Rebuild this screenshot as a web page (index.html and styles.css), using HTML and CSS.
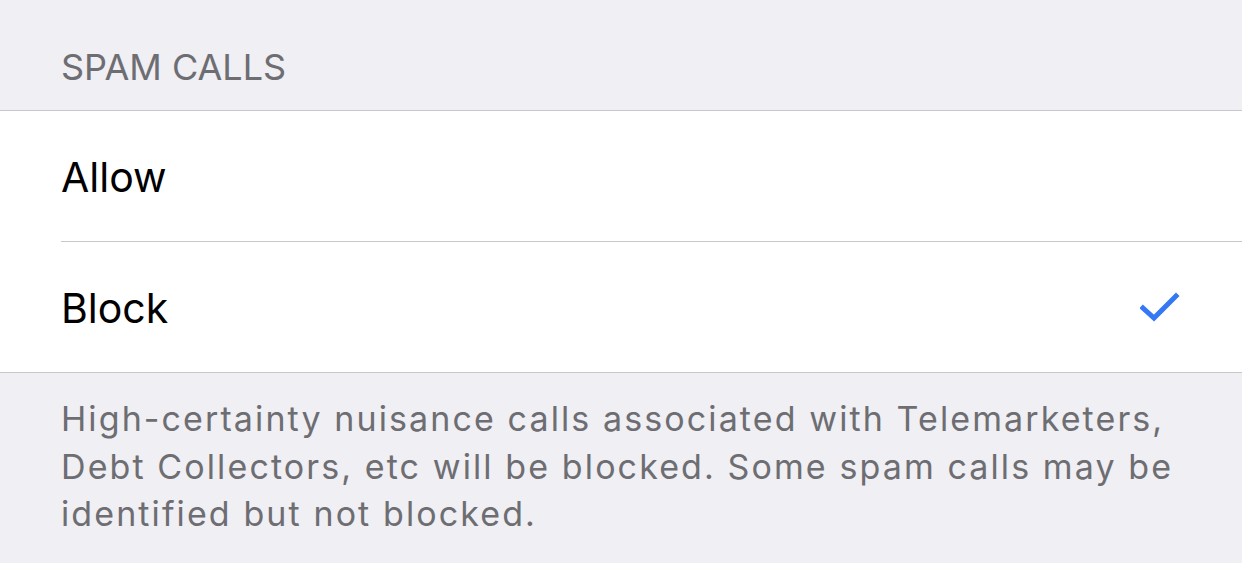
FILE: index.html
```html
<!DOCTYPE html>
<html lang="en">
<head>
    <meta charset="UTF-8">
    <meta name="viewport" content="width=device-width, initial-scale=1.0">
    <title>Spam Calls</title>
    <link rel="stylesheet" href="styles.css">
</head>
<body>
    <div class="section">
        <h2 class="section-title">SPAM CALLS</h2>
        <ul class="options">
            <li class="option">
                <span class="option-label">Allow</span>
            </li>
            <li class="option">
                <span class="option-label">Block</span>
                <svg class="check" width="40" height="32" viewBox="0 0 40 32">
                    <path d="M3 17 L14 27 L36 5" fill="none" stroke="#3478f6" stroke-width="5" stroke-linecap="square"/>
                </svg>
            </li>
        </ul>
        <p class="section-footer">High-certainty nuisance calls associated with Telemarketers, Debt Collectors, etc will be blocked. Some spam calls may be identified but not blocked.</p>
    </div>
</body>
</html>
```

FILE: styles.css
```css
body {
    margin: 0;
    padding: 0;
    background-color: #efeff4;
    font-family: Inter, "Liberation Sans", Arial, sans-serif;
    overflow: hidden;
}

.section-title {
    margin: 0;
    padding: 50px 0 0 61px;
    height: 60px;
    font-size: 36px;
    font-weight: normal;
    color: #6d6d72;
    line-height: 34px;
    border-bottom: 1px solid #c8c7cc;
}

.options {
    list-style: none;
    margin: 0;
    padding: 0 0 0 61px;
    background: #fff;
    border-bottom: 1px solid #c8c7cc;
}

.option {
    display: flex;
    align-items: center;
    justify-content: space-between;
    height: 130px;
    padding-right: 62px;
    font-size: 41px;
    color: #000;
}

.option + .option {
    border-top: 1px solid #c8c7cc;
}

.option-label {
    margin-top: 2px;
}

.check {
    display: block;
}

.section-footer {
    margin: 0;
    padding: 22px 60px 0 61px;
    font-size: 34px;
    line-height: 47.5px;
    letter-spacing: 2.1px;
    color: #6d6d72;
}
```
